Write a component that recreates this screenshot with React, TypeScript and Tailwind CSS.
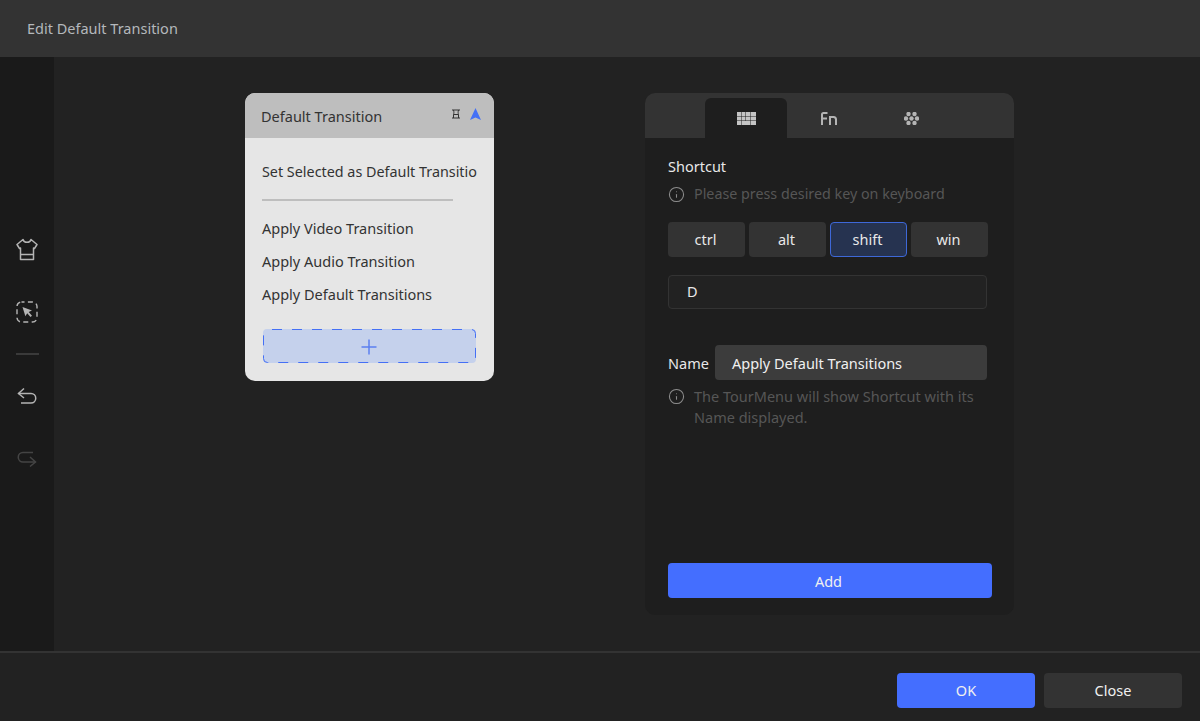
import { Info } from "lucide-react";

const font = { fontFamily: '"Noto Sans", sans-serif' };

function ShirtIcon() {
  return (
    <svg width="22" height="23" viewBox="0 0 22 23" fill="none" stroke="#b4b4b4" strokeWidth="1.500" strokeLinejoin="round">
      <path d="M7 1.500C7.500 3.500 9 4.300 11 4.300S14.500 3.500 15 1.500L21 6.500 18.500 10.500 17.500 10V21.500H4.500V10L3.500 10.500 1 6.500z" />
      <path d="M4.500 16.500h13" />
    </svg>
  );
}

function SelectIcon() {
  return (
    <svg width="22" height="22" viewBox="0 0 22 22" fill="none">
      <rect x="1" y="1" width="20" height="20" rx="4.500" stroke="#b4b4b4" strokeWidth="1.400" strokeDasharray="5 3.400" strokeDashoffset="2" />
      <path d="M6.500 6 16 9.500l-3.300 1.500 3.300 3.800-1.500 1.200-3.300-3.800-1.800 3z" fill="#b4b4b4" />
    </svg>
  );
}

function UndoIcon({ color }: { color: string }) {
  return (
    <svg width="20" height="18" viewBox="0 0 20 18" fill="none" stroke={color} strokeWidth="1.500">
      <path d="M7 1.500 1.500 6.500 7 11" />
      <path d="M1.500 6.500H14a4.500 4.500 0 0 1 0 9.500H4" />
    </svg>
  );
}

function RedoIcon({ color }: { color: string }) {
  return (
    <svg width="20" height="18" viewBox="0 0 20 18" fill="none" stroke={color} strokeWidth="1.500">
      <path d="M13 7l5.500 5-5.500 4.500" />
      <path d="M18.500 12H6a4.500 4.500 0 0 1 0-9.500h10" />
    </svg>
  );
}

function KeyboardIcon() {
  const cells = [
    [0, 0, 4], [4.500, 0, 4], [9, 0, 4], [13.500, 0, 5.500],
    [0, 4.500, 4], [4.500, 4.500, 4], [9, 4.500, 4], [13.500, 4.500, 5.500],
    [0, 9, 4], [4.500, 9, 8.500], [13.500, 9, 5.500],
  ];
  return (
    <svg width="19" height="13" viewBox="0 0 19 13" fill="#c4c4c4">
      {cells.map(([x, y, w]) => (
        <rect key={`${x}-${y}`} x={x} y={y} width={w} height="4" />
      ))}
    </svg>
  );
}

function FnIcon() {
  return (
    <svg width="16" height="13" viewBox="0 0 16 13" fill="none" stroke="#b4b4b4" strokeWidth="2" className="ml-[2px]">
      <path d="M1 13V2.500C1 1.500 1.500 1 2.500 1H6.500M1 6.500H6" />
      <path d="M9 13V5h3.500c1.500 0 2.500 1 2.500 2.500V13" />
    </svg>
  );
}

function DotsIcon() {
  const dots = [
    [4.500, 2], [10.500, 2], [2, 6.500], [7.500, 6.500], [13, 6.500], [4.500, 11], [10.500, 11],
  ];
  return (
    <svg width="15" height="13" viewBox="0 0 15 13" fill="#b4b4b4" className="ml-[2px]">
      {dots.map(([cx, cy]) => (
        <circle key={`${cx}-${cy}`} cx={cx} cy={cy} r="2.200" />
      ))}
    </svg>
  );
}

function KeyButton({ label, active }: { label: string; active?: boolean }) {
  return (
    <div
      className={`flex h-[35px] w-[77px] items-center justify-center rounded pr-[2px] pt-[1px] text-[14.500px] text-[#e8e8e8] ${
        active ? "border border-[#3e68d8] bg-[#263350]" : "bg-[#333333]"
      }`}
    >
      {label}
    </div>
  );
}

export default function App() {
  return (
    <div className="flex h-[721px] w-[1200px] flex-col overflow-hidden bg-[#222222]" style={font}>
      <header className="flex h-[57px] shrink-0 items-center bg-[#333333] pl-[27px] text-[14.500px] text-[#b4b8bc]">
        Edit Default Transition
      </header>

      <div className="flex min-h-0 flex-1">
        {/* tool rail */}
        <aside className="flex w-[54px] shrink-0 flex-col items-center bg-[#1a1a1a] pt-[181px]">
          <ShirtIcon />
          <div className="mt-[40px]">
            <SelectIcon />
          </div>
          <div className="mt-[30px] h-[2px] w-[23px] bg-[#3a3a3a]" />
          <div className="mt-[32px]">
            <UndoIcon color="#b4b4b4" />
          </div>
          <div className="mt-[45px]">
            <RedoIcon color="#444444" />
          </div>
        </aside>

        <main className="flex flex-1 items-start pl-[191px] pt-[36px]">
          {/* menu preview */}
          <section className="flex h-[288px] w-[249px] flex-col overflow-hidden rounded-[10px] bg-[#e6e6e6]">
            <div className="flex h-[45px] shrink-0 items-center justify-between bg-[#bebebe] pl-[16px] pr-[13px] text-[14.500px] text-[#333333]">
              <span className="mt-[3px]">Default Transition</span>
              <div className="mb-[3px] flex items-center gap-[9px]">
                <svg width="10" height="10" viewBox="0 0 10 10" fill="none" stroke="#333333" strokeWidth="1">
                  <path d="M1 1h8M2.500 1c.500 2 .500 3 0 4.500h5c-.500-1.500-.500-2.500 0-4.500M1 9h8M2.500 5.500V9M7.500 5.500V9" />
                </svg>
                <svg width="11" height="12" viewBox="0 0 11 12" fill="#4570f5">
                  <path d="M5.500 0 11 12 5.500 9.500 0 12z" />
                </svg>
              </div>
            </div>
            <div className="flex flex-1 flex-col pl-[17px] text-[14.500px] text-[#333333]">
              <div className="mt-[24px] whitespace-nowrap text-[14.350px] leading-[20px]">Set Selected as Default Transitio</div>
              <div className="mt-[17px] h-[2px] w-[191px] bg-[#bebebe]" />
              <div className="mt-[17px] leading-[20px]">Apply Video Transition</div>
              <div className="mt-[13px] leading-[20px]">Apply Audio Transition</div>
              <div className="mt-[13px] leading-[20px]">Apply Default Transitions</div>
              <div className="relative mt-[25px] ml-[1px] flex h-[34px] w-[213px] items-center justify-center rounded bg-[#c5d1ec]">
                <svg className="absolute inset-0" width="213" height="34" fill="none" stroke="#4570f5" strokeWidth="1">
                  <rect x="0.500" y="0.500" width="212" height="33" rx="4" strokeDasharray="10 10" strokeDashoffset="15.500" />
                </svg>
                <svg width="16" height="16" viewBox="0 0 16 16" stroke="#5b7ff0" strokeWidth="1.500" className="mr-[1px] mt-[2px]">
                  <path d="M8 0.500v15M0.500 8h15" />
                </svg>
              </div>
            </div>
          </section>

          {/* shortcut editor */}
          <section className="ml-[151px] flex h-[522px] w-[369px] flex-col overflow-hidden rounded-[10px] bg-[#1e1e1e]">
            <div className="flex h-[45px] shrink-0 items-end bg-[#333333] pl-[60px]">
              <div className="flex h-[40px] w-[82px] items-center justify-center rounded-t-md bg-[#1e1e1e]">
                <KeyboardIcon />
              </div>
              <div className="flex h-[40px] w-[82px] items-center justify-center">
                <FnIcon />
              </div>
              <div className="flex h-[40px] w-[82px] items-center justify-center">
                <DotsIcon />
              </div>
            </div>

            <div className="flex flex-1 flex-col pl-[23px] pr-[22px] text-[14.500px]">
              <div className="mt-[18px] leading-[20px] text-[#e8e8e8]">Shortcut</div>
              <div className="mt-[8px] flex items-center gap-[9px] text-[14.300px] leading-[20px] text-[#565656]">
                <Info size={17} strokeWidth={1.500} className="text-[#8c8c8c]" />
                Please press desired key on keyboard
              </div>
              <div className="mt-[18px] flex gap-[4px]">
                <KeyButton label="ctrl" />
                <KeyButton label="alt" />
                <KeyButton label="shift" active />
                <KeyButton label="win" />
              </div>
              <div className="mt-[18px] flex h-[34px] w-[319px] items-center rounded border border-[#333333] bg-[#222222] pl-[18px] text-[#e8e8e8]">
                D
              </div>
              <div className="mt-[36px] flex items-center">
                <span className="w-[47px] pt-[2px] text-[#e8e8e8]">Name</span>
                <div className="flex h-[35px] w-[272px] items-center rounded bg-[#3c3c3c] pl-[17px] pt-[2px] text-[#f0f0f0]">
                  Apply Default Transitions
                </div>
              </div>
              <div className="mt-[6px] flex items-start gap-[9px] leading-[21px] text-[#565656]">
                <Info size={17} strokeWidth={1.500} className="mt-[2px] shrink-0 text-[#8c8c8c]" />
                <p className="w-[290px]">The TourMenu will show Shortcut with its Name displayed.</p>
              </div>
              <div className="mt-auto mb-[17px] flex h-[35px] w-[324px] items-center justify-center rounded bg-[#446eff] pr-[3px] pt-[2px] text-[#f0f0f0]">
                Add
              </div>
            </div>
          </section>
        </main>
      </div>

      <footer className="flex h-[70px] shrink-0 items-start justify-end gap-[9px] border-t-2 border-[#333333] pr-[18px] pt-[20px] text-[14.500px] text-[#f0f0f0]">
        <div className="flex h-[35px] w-[138px] items-center justify-center rounded bg-[#446eff] pt-[1px]">OK</div>
        <div className="flex h-[35px] w-[138px] items-center justify-center rounded bg-[#333333] pt-[1px]">Close</div>
      </footer>
    </div>
  );
}
